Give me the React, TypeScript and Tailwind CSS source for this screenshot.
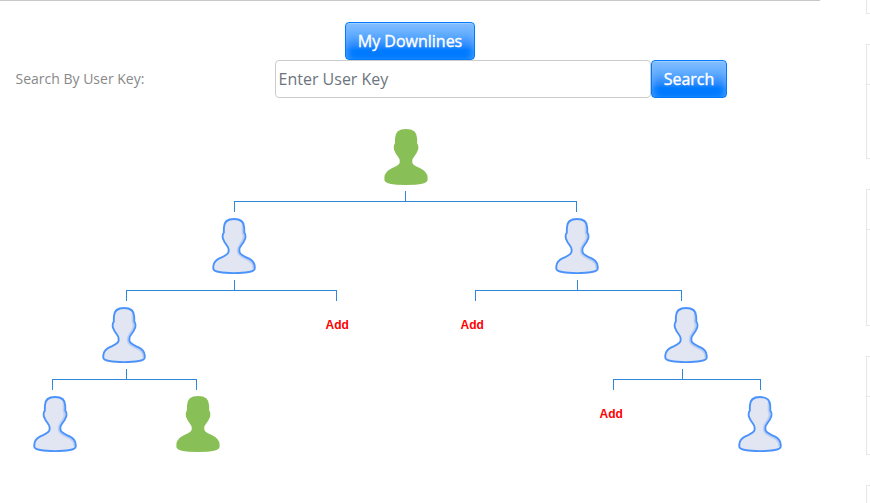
import React from "react";

type Kind = "active" | "member";

const SHAPE =
  "M22 1C15.6 1 12 3.4 11.9 9.5L11.8 14.8C10.3 16 10.2 20.6 11.7 22.2C12.6 25.2 16.6 28.8 16.6 31.2V33.6C16.2 37 11 38.6 7.8 40.2C3.4 42.4 1.5 44.6 1.3 48.2V50.8C1.3 53.4 10 55.1 22 55.1S42.7 53.4 42.7 50.8V48.2C42.5 44.6 40.6 42.4 36.2 40.2C33 38.6 27.8 37 27.4 33.6V31.2C27.4 28.8 31.5 25.2 32.4 22.2C33.9 20.6 33.8 16 32.3 14.8L32.2 9.5C32.1 3.4 28.4 1 22 1Z";

const people: { x: number; y: number; kind: Kind }[] = [
  { x: 384, y: 129, kind: "active" },
  { x: 212, y: 218, kind: "member" },
  { x: 555, y: 218, kind: "member" },
  { x: 102, y: 307, kind: "member" },
  { x: 664, y: 307, kind: "member" },
  { x: 33, y: 396, kind: "member" },
  { x: 176, y: 396, kind: "active" },
  { x: 738, y: 396, kind: "member" },
];

const branches = [
  { stem: 405, left: 234, right: 576, y: 201 },
  { stem: 234, left: 126, right: 336, y: 290 },
  { stem: 577, left: 475, right: 681, y: 290 },
  { stem: 126, left: 52, right: 196, y: 379 },
  { stem: 682, left: 613, right: 760, y: 379 },
];

const openSlots = [
  { x: 325.5, y: 317 },
  { x: 460.5, y: 317 },
  { x: 599.5, y: 406 },
];

function Person({ kind }: { kind: Kind }) {
  if (kind === "active") {
    return (
      <svg width="44" height="56" viewBox="0 0 44 56" className="block">
        <path d={SHAPE} fill="#88c057" stroke="#88c057" strokeWidth="1.8" />
      </svg>
    );
  }
  return (
    <svg width="44" height="56" viewBox="0 0 44 56" className="block">
      <path d={SHAPE} fill="#e1e6f2" />
      <path
        d="M30.6 6V15C31.8 17 31.6 20.6 30.6 22C29.6 25 25.8 28.5 25.8 31.2V34C26.4 38 31 39.6 35 41.4C39 43.4 41 45.4 41.1 48.2V50.6"
        fill="none"
        stroke="#bccff1"
        strokeWidth="1.8"
      />
      <path d={SHAPE} fill="none" stroke="#4b93fb" strokeWidth="1.9" />
    </svg>
  );
}

function GlossButton({ children, className }: { children: string; className: string }) {
  return (
    <button
      className={`h-[38px] shrink-0 rounded-[4px] border border-[#007bff] bg-linear-to-b from-[#80bdff] from-5% via-[#5ca9ff] via-35% to-[#007bff] to-75% text-[16px] leading-6 font-normal text-white shadow-[inset_0_1px_0_#a0ceff,inset_5px_0_6px_-3px_rgba(128,189,255,0.5),inset_-5px_0_6px_-3px_rgba(128,189,255,0.5)] [-webkit-text-stroke:0.4px_white] ${className}`}
    >
      {children}
    </button>
  );
}

function SidePanel({ className }: { className: string }) {
  return (
    <div className={`shrink-0 border border-r-0 border-[#e7e7e7] ${className}`}>
      <div className="h-10 border-b border-[#e7e7e7]" />
    </div>
  );
}

export default function App() {
  return (
    <div className="flex h-[503px] w-[870px] overflow-hidden bg-white font-['Open_Sans',sans-serif]">
      <main className="relative w-[820px] shrink-0 border-t border-[#c8c8c8] pt-[21px]">
        <div className="flex justify-center">
          <GlossButton className="w-[130px]">My Downlines</GlossButton>
        </div>
        <form className="flex items-center" onSubmit={(e) => e.preventDefault()}>
          <label htmlFor="user-key" className="w-[275px] pb-[2px] pl-[15.5px] text-[14px] leading-[21px] text-[#888]">
            Search By User Key:
          </label>
          <input
            id="user-key"
            placeholder="Enter User Key"
            className="h-[38px] w-[376px] rounded-[4px] border border-[#ccc] bg-white px-[2.5px] text-[16px] text-[#6c757d] outline-none placeholder:text-[#6c757d]"
          />
          <GlossButton className="w-[76px]">Search</GlossButton>
        </form>

        <div className="pointer-events-none absolute -top-px left-0 h-[503px] w-[820px]">
          <svg width="820" height="503" className="block" shapeRendering="crispEdges">
            {branches.map((b) => (
              <path
                key={b.stem}
                d={`M${b.stem + 0.5} ${b.y - 10}V${b.y}M${b.left + 0.5} ${b.y + 11}V${b.y + 0.5}H${b.right + 0.5}V${b.y + 11}`}
                fill="none"
                stroke="#3087d9"
                strokeWidth="1"
              />
            ))}
          </svg>
          {people.map((p) => (
            <div key={`${p.x}-${p.y}`} className="absolute" style={{ left: p.x, top: p.y }}>
              <Person kind={p.kind} />
            </div>
          ))}
          {openSlots.map((s) => (
            <a
              key={`${s.x}-${s.y}`}
              className="pointer-events-auto absolute font-['Liberation_Sans',Arial,sans-serif] text-[12px] leading-[17px] font-bold text-[#f00]"
              style={{ left: s.x, top: s.y }}
            >
              Add
            </a>
          ))}
        </div>
      </main>

      <aside className="ml-[46px] flex w-1 shrink-0 flex-col gap-[30px]">
        <div className="h-[14px] shrink-0 border-b border-l border-[#e7e7e7]" />
        <SidePanel className="h-[115px]" />
        <SidePanel className="h-[137px]" />
        <SidePanel className="h-[99px]" />
        <SidePanel className="h-[100px]" />
      </aside>
    </div>
  );
}
